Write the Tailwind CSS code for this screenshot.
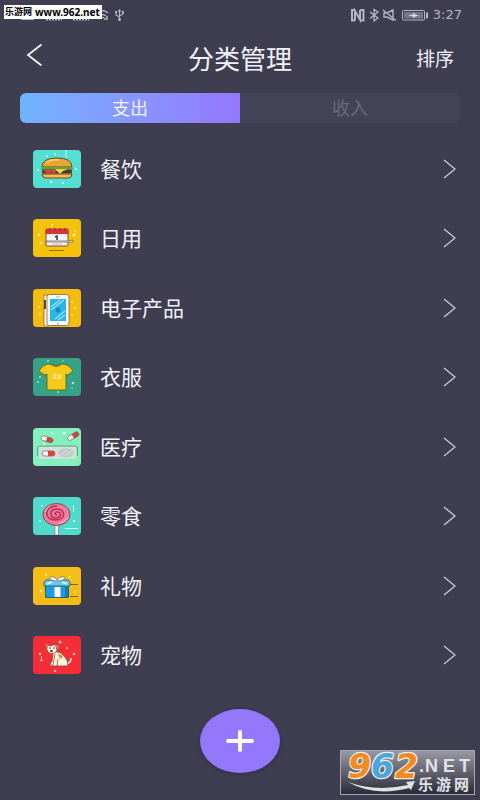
<!DOCTYPE html>
<html lang="zh-CN">
<head>
<meta charset="utf-8">
<meta name="viewport" content="width=device-width, initial-scale=1">
<title>分类管理</title>
<script src="https://cdn.jsdelivr.net/npm/@tailwindcss/browser@4"></script>
</head>
<body class="bg-[#3f3e50] text-[#f3f2fa] font-['Liberation_Sans','Noto_Sans_CJK_SC',sans-serif]">
<div class="relative min-h-screen flex flex-col">

  <!-- Status bar -->
  <div class="relative h-[30px] flex items-center justify-between pl-5 pr-[18px] text-[#b5b4c2]">
    <svg class="w-[106px] h-[30px]" viewBox="20 0 106 30" fill="none" stroke="currentColor" aria-hidden="true">
      <path d="M21 19h13" stroke-width="2"/>
      <path d="M46 19.500h16M73 19.500h16" stroke-width="2" stroke-dasharray="2 1"/>
      <path d="M96 13q6-5 12 0M98 16q4-3 8 0M101 18q2-1 3 0" stroke-width="1.300"/>
      <path d="M107 16v4M105 18v2" stroke-width="1.500"/>
      <path d="M119.500 10v9M116 12v3l3.500 2M123 12v2l-3.500 2" stroke-width="1.200"/>
      <path d="M117.500 11.500l2-2.500 2 2.500z" fill="currentColor" stroke="none"/>
      <circle cx="119.500" cy="19.500" r="1.500" fill="currentColor" stroke="none"/>
      <path d="M115 11h2v2h-2zM122 11h2v2h-2z" fill="currentColor" stroke="none"/>
    </svg>
    <div class="flex items-center">
      <svg class="w-[82px] h-[30px]" viewBox="350 0 82 30" fill="none" stroke="currentColor" aria-hidden="true">
        <path d="M355 10h-3v10.500h3M360 10h3.500v10.500H360" stroke-width="2"/>
        <path d="M355 20.500V11l5 8.500V10" stroke-width="2"/>
        <path d="M370 12l8 6-4 3V9.500l4 2.500-8 6.500" stroke-width="1.300"/>
        <path d="M384 13h3l6-3v10l-6-3h-3zM383 10l13 10.500" stroke-width="1.400"/>
        <rect x="402.500" y="10.500" width="22" height="9.500" rx="1" stroke-width="1"/>
        <path d="M404 12h19v6.500h-19z" fill="#77768a" stroke="none"/>
        <path d="M408 15.500l5-1 1-2 1 2 4 1-4 1-1 2-1-2z" fill="#dddce6" stroke="none"/>
        <path d="M427 12.500v6" stroke-width="2"/>
      </svg>
      <span class="text-[13px] leading-5 w-[30px] text-right font-['DejaVu_Sans',sans-serif]">3:27</span>
    </div>
    <div class="absolute left-1 top-[5px] h-[14px] w-[98px] bg-white text-black text-[10px] leading-[14px] font-bold whitespace-nowrap flex gap-[3px] pl-px font-['Noto_Sans','Noto_Sans_CJK_SC',sans-serif]"><span class="text-[9px]">乐游网</span><span>www.962.net</span></div>
  </div>

  <!-- Title bar -->
  <header class="grid grid-cols-[1fr_auto_1fr] items-center h-[58px] px-[26px]">
    <button type="button" aria-label="返回" class="justify-self-start pb-2">
      <svg class="w-[18px] h-[24px]" viewBox="0 0 18 24" fill="none" stroke="currentColor" stroke-width="1.800"><path d="M15.500 1.500L2 12l13.500 10.500"/></svg>
    </button>
    <h1 class="pt-0.5 text-[26px] leading-8 font-normal">分类管理</h1>
    <button type="button" class="justify-self-end pt-0.5 text-[19px] leading-6">排序</button>
  </header>

  <!-- Expense / income tabs -->
  <div role="tablist" class="mx-5 mt-[5px] h-[30px] grid grid-cols-2 rounded-md overflow-hidden bg-[#444358] text-[18px] leading-7">
    <button type="button" role="tab" aria-selected="true" class="pt-0.5 bg-linear-to-r from-[#70b4ff] to-[#9477ff]">支出</button>
    <button type="button" role="tab" aria-selected="false" class="pt-0.5 text-[#6b6a7c]">收入</button>
  </div>

  <ul class="mt-[11px] h-[556px] grid grid-rows-8 text-[21px] leading-7">
    <li><a href="#" class="h-full flex items-center pl-[33px] pr-6">
      <svg class="w-12 h-[38px] rounded-[4px]" viewBox="0 0 48 38" aria-hidden="true">
        <path fill="#55dfd3" d="M0 0h48v38H0z"/>
        <g fill="#c9fff8"><circle cx="14" cy="6" r="1"/><circle cx="22" cy="4" r="1"/><circle cx="5" cy="20" r="1"/><circle cx="43" cy="19" r="1"/><circle cx="18" cy="32" r="1.200"/><circle cx="30" cy="33" r="1"/><path d="M32.500 0h1v7h-1z"/></g>
        <path d="M9 17q0-9 15-9t15 9z" fill="#e8a735" stroke="#704621"/>
        <path d="M14 13q3-4 12-3" stroke="#ffd371" stroke-width="1.500" fill="none"/>
        <rect x="8" y="17" width="32" height="3" rx="1.500" fill="#59a83e"/>
        <rect x="9" y="19.500" width="30" height="4" rx="1.500" fill="#66302a"/>
        <path d="M10 20h14l-3 4-3-2-3 2z" fill="#e73b38"/><path d="M22 19h13l-5 2-3 3z" fill="#ffd244"/>
        <path d="M9 24h30q0 4-4 4H13q-4 0-4-4z" fill="#f2bd55" stroke="#704621"/>
      </svg>
      <span class="ml-[19px] pt-0.5 grow">餐饮</span>
      <svg class="w-[13px] h-5" viewBox="0 0 13 20" fill="none" stroke="#c9c8d5" stroke-width="1.400" aria-hidden="true"><path d="M1 1l11 9-11 9"/></svg>
    </a></li>
    <li><a href="#" class="h-full flex items-center pl-[33px] pr-6">
      <svg class="w-12 h-[38px] rounded-[4px]" viewBox="0 0 48 38" aria-hidden="true">
        <path fill="#f5c20b" d="M0 0h48v38H0z"/>
        <g fill="#fff2a2"><circle cx="19" cy="6" r="1.200"/><circle cx="6" cy="16" r="1.200"/><circle cx="8" cy="24" r="1.200"/><circle cx="41" cy="16" r="1.500"/><circle cx="42" cy="12" r=".8"/></g>
        <rect x="13" y="10" width="22" height="17" rx="1" fill="#f5f3f3" stroke="#87503b"/>
        <path d="M12.500 10h23v5h-23z" fill="#d7343b"/>
        <path d="M17 9v3M22 9v3M27 9v3M32 9v3" stroke="#963637" stroke-width="1.200"/>
        <path d="M22 18l2-1v4" stroke="#484155" stroke-width="1.600" fill="none"/>
        <path d="M13 22h22l5-1v2H13z" fill="#fff" stroke="#735c55" stroke-width=".7"/>
        <path d="M16 31.500h15" stroke="#987018"/><path d="M19 25h10" stroke="#c9b6c3"/>
      </svg>
      <span class="ml-[19px] pt-0.5 grow">日用</span>
      <svg class="w-[13px] h-5" viewBox="0 0 13 20" fill="none" stroke="#c9c8d5" stroke-width="1.400" aria-hidden="true"><path d="M1 1l11 9-11 9"/></svg>
    </a></li>
    <li><a href="#" class="h-full flex items-center pl-[33px] pr-6">
      <svg class="w-12 h-[38px] rounded-[4px]" viewBox="0 0 48 38" aria-hidden="true">
        <path fill="#f4bd0e" d="M0 0h48v38H0z"/>
        <g fill="#fff095"><circle cx="6" cy="18" r="1"/><circle cx="8" cy="14" r=".8"/><circle cx="7" cy="25" r="1"/><circle cx="39" cy="13" r="1"/><circle cx="42" cy="19" r="1"/><circle cx="39" cy="26" r="1"/></g>
        <rect x="11" y="6" width="5" height="31" rx="1.500" fill="#fff3d8" stroke="#735c36" stroke-width=".7"/>
        <path d="M11 11h2v9h-2z" fill="#5e4941"/>
        <rect x="14" y="5.500" width="22" height="31" rx="2.500" fill="#fff" stroke="#796843" stroke-width=".8"/>
        <path d="M17 10h16v22H17z" fill="#28b6e8"/>
        <path d="M18 18l9-7M18 21l13-10M22 30l10-8M25 31l7-5" stroke="#9fe5f7" stroke-width="1.200"/>
        <circle cx="25" cy="21" r="2.500" fill="#1686cd"/><circle cx="25" cy="34.500" r="1" fill="#a9a5a5"/><path d="M23 8h4" stroke="#a9a5a5"/>
      </svg>
      <span class="ml-[19px] pt-0.5 grow">电子产品</span>
      <svg class="w-[13px] h-5" viewBox="0 0 13 20" fill="none" stroke="#c9c8d5" stroke-width="1.400" aria-hidden="true"><path d="M1 1l11 9-11 9"/></svg>
    </a></li>
    <li><a href="#" class="h-full flex items-center pl-[33px] pr-6">
      <svg class="w-12 h-[38px] rounded-[4px]" viewBox="0 0 48 38" aria-hidden="true">
        <path fill="#36a386" d="M0 0h48v38H0z"/>
        <g fill="#9ce5d5"><circle cx="15" cy="3" r="1"/><circle cx="30" cy="3" r=".8"/><circle cx="7" cy="19" r="1"/><circle cx="5" cy="24" r="1"/><circle cx="40" cy="25" r="1.300"/><circle cx="39" cy="30" r=".8"/><circle cx="25" cy="34" r="1"/></g>
        <path d="M17 6q6 3 12 0 7 0 11 7l-5 4-2-1v16H14V16l-3 1-5-4Q10 6 17 6z" fill="#f7ca18" stroke="#5d702b"/>
        <path d="M17 6q6 5 12 0" fill="none" stroke="#937226"/>
        <text x="24" y="21" text-anchor="middle" font-family="Liberation Sans" font-size="8" font-weight="bold" fill="#fff5b4">23</text>
      </svg>
      <span class="ml-[19px] pt-0.5 grow">衣服</span>
      <svg class="w-[13px] h-5" viewBox="0 0 13 20" fill="none" stroke="#c9c8d5" stroke-width="1.400" aria-hidden="true"><path d="M1 1l11 9-11 9"/></svg>
    </a></li>
    <li><a href="#" class="h-full flex items-center pl-[33px] pr-6">
      <svg class="w-12 h-[38px] rounded-[4px]" viewBox="0 0 48 38" aria-hidden="true">
        <path fill="#83f1bd" d="M0 0h48v38H0z"/>
        <g fill="#dfffee"><circle cx="19" cy="5" r="1"/><circle cx="31" cy="5" r="1.500"/><circle cx="11" cy="16" r="1"/></g>
        <g stroke="#8b6452" stroke-width=".7"><g transform="rotate(16 14 11)"><rect x="8" y="9" width="12" height="4.500" rx="2.200" fill="#fff"/><path d="M14 9h4a2 2 0 010 4.500h-4z" fill="#da4136"/></g><g transform="rotate(-30 40 8)"><rect x="34" y="6" width="12" height="4.500" rx="2.200" fill="#fff"/><path d="M40 6h4a2 2 0 010 4.500h-4z" fill="#da4136"/></g></g>
        <rect x="6" y="19" width="37" height="12" fill="#d3dfda"/>
        <path d="M4.500 28v-8q0-2 2-2h35q3 0 3 2v8" fill="none" stroke="#6c9d83"/>
        <rect x="9" y="23" width="13" height="5" rx="2.500" fill="#fff" stroke="#8f8284"/><path d="M15 23h4.500a2.500 2.500 0 010 5H15z" fill="#d9443b"/>
        <ellipse cx="33" cy="25" rx="8" ry="4.500" fill="#bccdc6"/><path d="M28 27l6-5M32 28l6-5" stroke="#d9e7e1"/>
      </svg>
      <span class="ml-[19px] pt-0.5 grow">医疗</span>
      <svg class="w-[13px] h-5" viewBox="0 0 13 20" fill="none" stroke="#c9c8d5" stroke-width="1.400" aria-hidden="true"><path d="M1 1l11 9-11 9"/></svg>
    </a></li>
    <li><a href="#" class="h-full flex items-center pl-[33px] pr-6">
      <svg class="w-12 h-[38px] rounded-[4px]" viewBox="0 0 48 38" aria-hidden="true">
        <path fill="#50dacb" d="M0 0h48v38H0z"/>
        <g fill="#cbfff7"><circle cx="9" cy="9" r="1"/><circle cx="7" cy="24" r="1"/><circle cx="41" cy="24" r="1.200"/><path d="M40 8h1v7h-1zM32 31h13v1H32z"/></g>
        <path d="M22 28h3.500v10H22z" fill="#fff" stroke="#7d7886" stroke-width=".7"/>
        <ellipse cx="23.500" cy="17.500" rx="13.500" ry="11" fill="#ef7e9c" stroke="#8f3f58"/>
        <path d="M24 18c-3 0-2-4 1-3 4 1 3 6-2 6-7 0-7-9 1-9 9 0 9 11-1 11-13 0-12-14 1-14" fill="none" stroke="#be2855" stroke-width="1.500"/>
        <path d="M12 15q1-4 5-6M35 20q-2 5-9 6" fill="none" stroke="#ffc0cd"/>
      </svg>
      <span class="ml-[19px] pt-0.5 grow">零食</span>
      <svg class="w-[13px] h-5" viewBox="0 0 13 20" fill="none" stroke="#c9c8d5" stroke-width="1.400" aria-hidden="true"><path d="M1 1l11 9-11 9"/></svg>
    </a></li>
    <li><a href="#" class="h-full flex items-center pl-[33px] pr-6">
      <svg class="w-12 h-[38px] rounded-[4px]" viewBox="0 0 48 38" aria-hidden="true">
        <path fill="#f4be16" d="M0 0h48v38H0z"/>
        <g fill="#fff09b"><circle cx="13" cy="8" r="1"/><circle cx="37" cy="10" r="1"/><circle cx="8" cy="24" r="1.200"/><circle cx="42" cy="25" r="1"/></g>
        <path d="M36 17.500h9M37 29.500h8" stroke="#7c622d"/>
        <path d="M12.500 18h23v12.500h-23z" fill="#199fe1" stroke="#265d83"/>
        <path d="M11 15l2-2h22l2 2v4H11z" fill="#69c9ef" stroke="#336b87"/>
        <path d="M24 14c-5 0-10-3-6-4 3-1 6 3 6 3s3-4 7-3c4 1-2 4-7 4z" fill="#fff" stroke="#62717f" stroke-width=".8"/>
        <path d="M21.500 20h6v10h-6z" fill="#f9fdff"/><path d="M14 17l5-2M29 15l5 2" stroke="#fff" stroke-width="1.500"/>
        <path d="M32 20h3v10h-3z" fill="#147bb9"/>
      </svg>
      <span class="ml-[19px] pt-0.5 grow">礼物</span>
      <svg class="w-[13px] h-5" viewBox="0 0 13 20" fill="none" stroke="#c9c8d5" stroke-width="1.400" aria-hidden="true"><path d="M1 1l11 9-11 9"/></svg>
    </a></li>
    <li><a href="#" class="h-full flex items-center pl-[33px] pr-6">
      <svg class="w-12 h-[38px] rounded-[4px]" viewBox="0 0 48 38" aria-hidden="true">
        <path fill="#f62c37" d="M0 0h48v38H0z"/>
        <g fill="#ffc7bf"><circle cx="27" cy="6" r="1.500"/><circle cx="34" cy="12" r="1"/><circle cx="41" cy="18" r="1.300"/><circle cx="7" cy="18" r="1.200"/><circle cx="22" cy="35" r="1.200"/><path d="M8 20h1v4H8zM7 24h3v1H7z"/></g>
        <path d="M33 28q5-1 5-6" fill="none" stroke="#f9e2c8" stroke-width="1.800"/>
        <path d="M20 16q7-1 10 3 5 4 5 11H16l3-5z" fill="#fff0dc" stroke="#7d4032" stroke-width=".8"/>
        <path d="M22 18l-2 11h-3M25 23l-1 7" fill="none" stroke="#8b5138" stroke-width=".8"/>
        <path d="M13 8l4 2 6-2 1 7q-3 4-8 2l-2-3z" fill="#fff2e2" stroke="#7d4032" stroke-width=".8"/>
        <path d="M12 7l4 2-2 4zM21 9l5 0-1 5z" fill="#c68351"/><circle cx="17" cy="12" r=".8" fill="#432b2b"/><circle cx="21" cy="12" r=".8" fill="#432b2b"/><ellipse cx="18.500" cy="15" rx="1.500" ry="1" fill="#432b2b"/>
        <path d="M25 18q4 0 5 3l-3 2z" fill="#d38d52"/>
      </svg>
      <span class="ml-[19px] pt-0.5 grow">宠物</span>
      <svg class="w-[13px] h-5" viewBox="0 0 13 20" fill="none" stroke="#c9c8d5" stroke-width="1.400" aria-hidden="true"><path d="M1 1l11 9-11 9"/></svg>
    </a></li>
  </ul>

  <div class="pt-[19px] pb-6 flex justify-center">
    <button type="button" aria-label="添加分类" class="w-20 h-16 rounded-[50%] bg-[#9478fb] flex items-center justify-center shadow-[0_1px_4px_#302b4a]">
      <svg class="w-7 h-[22px]" viewBox="0 0 28 22" stroke="#fff" stroke-width="4" stroke-linecap="round"><path d="M2 11h24M14 2v18"/></svg>
    </button>
  </div>

  <!-- Site watermark -->
  <div class="absolute right-[5px] bottom-[5px]">
    <svg class="w-[135px] h-[45px] overflow-visible" viewBox="0 0 135 45" role="img" aria-label="962.NET 乐游网">
      <defs><linearGradient id="plate" x2="0" y2="1"><stop stop-color="#999aa5"/><stop offset=".5" stop-color="#61616f"/><stop offset="1" stop-color="#292a38"/></linearGradient></defs>
      <rect x=".5" y=".5" width="134" height="44" fill="url(#plate)" stroke="#a8a8b2"/>
      <g font-weight="bold">
        <g font-family="DejaVu Sans, sans-serif" font-size="33" font-style="italic" stroke="#f1eee9" stroke-width="2.500" paint-order="stroke" stroke-linejoin="round">
          <text y="28"><tspan x="8" fill="#f28b1e">9</tspan><tspan x="31" fill="#4aa5dc">6</tspan><tspan x="55" fill="#f28b1e">2</tspan></text>
        </g>
        <g font-family="Liberation Sans, Noto Sans CJK SC, sans-serif" fill="#e2e2e5"><text y="22" font-size="18"><tspan x="79">.</tspan><tspan x="85">N</tspan><tspan x="103">E</tspan><tspan x="119">T</tspan></text>
        <text y="40" font-size="15"><tspan x="78">乐</tspan><tspan x="96">游</tspan><tspan x="114">网</tspan></text></g>
      </g>
      <path d="M8 32q28 10 60 3l-2-3 9-1-4 9-2-2Q34 47 8 32z" fill="#e1e1e4"/>
    </svg>
  </div>
</div>
</body>
</html>
